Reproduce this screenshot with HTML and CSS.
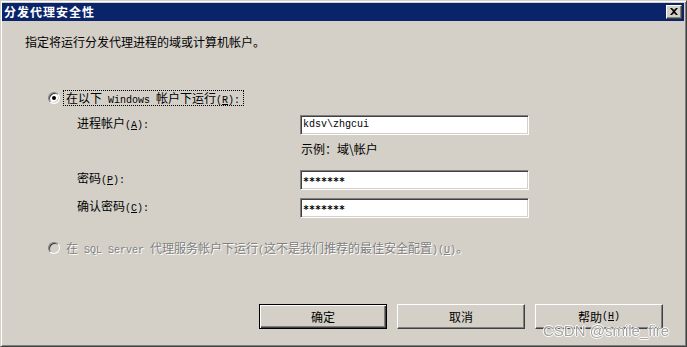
FILE: index.html
```html
<!DOCTYPE html>
<html lang="zh-CN">
<head>
<meta charset="utf-8">
<title>分发代理安全性</title>
<link rel="stylesheet" href="styles.css">
</head>
<body>
<div class="window">
  <div class="titlebar">
    <span class="title">分发代理安全性</span>
    <span class="close">
      <svg width="8" height="7" viewBox="0 0 8 7"><path d="M0 0h2l2 2 2-2h2L5 3.5 8 7H6L4 5 2 7H0l3-3.5z" fill="#000"/></svg>
    </span>
  </div>
  <div class="content">
    <div class="intro">指定将运行分发代理进程的域或计算机帐户。</div>

    <div class="option">
      <span class="radio checked"></span>
      <span class="opt-label focus">在以下<span class="m"> Windows </span>帐户下运行<span class="m">(<u>R</u>):</span></span>
    </div>

    <div class="fields">
      <div class="row">
        <span class="flabel">进程帐户<span class="m">(<u>A</u>):</span></span>
        <div class="input"><span class="m">kdsv\zhgcui</span></div>
      </div>
      <div class="hint">示例：域\帐户</div>
      <div class="row row2">
        <span class="flabel">密码<span class="m">(<u>P</u>):</span></span>
        <div class="input"><span class="m stars">*******</span></div>
      </div>
      <div class="row row3">
        <span class="flabel">确认密码<span class="m">(<u>C</u>):</span></span>
        <div class="input"><span class="m stars">*******</span></div>
      </div>
    </div>

    <div class="option disabled">
      <span class="radio"></span>
      <span class="opt-label">在<span class="m"> SQL Server </span>代理服务帐户下运行<span class="m">(</span>这不是我们推荐的最佳安全配置<span class="m">)(<u>U</u>)</span>。</span>
    </div>

    <div class="buttons">
      <div class="btn default">确定</div>
      <div class="btn">取消</div>
      <div class="btn">帮助<span class="m">(<u>H</u>)</span></div>
    </div>
  </div>
  <div class="watermark">CSDN @smile_fire</div>
</div>
</body>
</html>
```
FILE: styles.css
```css
html, body {
  margin: 0;
  padding: 0;
  background: #d4d0c8;
}
body {
  font-family: "Noto Sans CJK SC", "Liberation Sans", sans-serif;
  font-size: 12px;
  color: #000;
}
.window {
  position: relative;
  width: 687px;
  height: 347px;
  box-sizing: border-box;
  background: #d4d0c8;
  border: 1px solid;
  border-color: #d4d0c8 #404040 #404040 #d4d0c8;
  box-shadow: inset 1px 1px #fff, inset -1px -1px #808080;
  padding: 2px 2px 2px 1px;
  display: flex;
  flex-direction: column;
}
.titlebar {
  height: 18px;
  background: #0a246a;
  display: flex;
  align-items: center;
  justify-content: space-between;
  padding: 0 2px;
}
.title {
  color: #fff;
  font-weight: bold;
  font-size: 12px;
  line-height: 14px;
  letter-spacing: 1px;
}
.close {
  width: 16px;
  height: 14px;
  box-sizing: border-box;
  background: #d4d0c8;
  border: 1px solid;
  border-color: #fff #404040 #404040 #fff;
  box-shadow: inset -1px -1px #808080;
  display: flex;
  align-items: center;
  justify-content: center;
  padding: 0 1px 1px 0;
}
.close svg { display: block; }
.content {
  display: flex;
  flex-direction: column;
  flex: 1;
}
.m {
  font-family: "Liberation Mono", monospace;
  font-size: 10px;
}
u { text-decoration-thickness: 1px; text-underline-offset: 1px; }
.intro {
  margin: 15px 0 0 23px;
  height: 12px;
  line-height: 12px;
}
.option {
  display: flex;
  align-items: center;
  height: 14px;
  margin: 43px 0 0 46px;
}
.option.disabled { margin-top: 23px; }
.radio {
  position: relative;
  width: 12px;
  height: 12px;
  box-sizing: border-box;
  border-radius: 50%;
  background: #fff;
  border: 1px solid;
  border-color: #808080 #fff #fff #808080;
  box-shadow: inset 1px 1px #404040, inset -1px -1px #d4d0c8;
  flex: none;
}
.radio.checked::after {
  content: "";
  position: absolute;
  left: 3px;
  top: 3px;
  width: 4px;
  height: 4px;
  border-radius: 50%;
  background: #000;
}
.disabled .radio { background: #d4d0c8; }
.opt-label {
  margin-left: 4px;
  line-height: 12px;
  padding: 0 2px;
  height: 12px;
}
.opt-label.focus {
  outline: 1px dotted #000;
  outline-offset: 0;
  padding: 1px 3px 1px 2px;
}
.disabled .opt-label {
  color: #808080;
  text-shadow: 1px 1px 0 #fff;
}
.fields {
  margin: 10px 0 0 75px;
  display: flex;
  flex-direction: column;
}
.row {
  display: flex;
  align-items: flex-start;
  height: 20px;
}
.row2 { margin-top: 15px; }
.row3 { margin-top: 8px; }
.flabel {
  width: 223px;
  flex: none;
  line-height: 12px;
  margin-top: 2px;
}
.input {
  width: 229px;
  height: 20px;
  box-sizing: border-box;
  background: #fff;
  border: 1px solid;
  border-color: #808080 #fff #fff #808080;
  box-shadow: inset 1px 1px #404040, inset -1px -1px #d4d0c8;
  padding: 0 2px;
  line-height: 18px;
  display: flex;
  align-items: center;
}
.input .m { font-size: 10px; }
.stars {
  position: relative;
  top: 2px;
  font-family: "DejaVu Sans Mono", monospace;
  font-weight: bold;
  font-size: 10px;
}
.hint {
  margin: 7px 0 0 224px;
  height: 13px;
  line-height: 13px;
}
.buttons {
  display: flex;
  justify-content: flex-end;
  gap: 10px;
  margin-top: 49px;
  padding-right: 21px;
}
.btn {
  width: 128px;
  height: 25px;
  box-sizing: border-box;
  background: #d4d0c8;
  border: 1px solid;
  border-color: #fff #404040 #404040 #fff;
  box-shadow: inset -1px -1px #808080;
  display: flex;
  align-items: center;
  justify-content: center;
  line-height: 12px;
}
.btn.default {
  border: 1px solid #000;
  box-shadow: inset 1px 1px #fff, inset -1px -1px #404040, inset -2px -2px #808080;
}
.watermark {
  position: absolute;
  left: 542px;
  top: 323px;
  line-height: 13px;
  font-family: "Liberation Sans", sans-serif;
  font-size: 15px;
  color: #a0a0a0;
  text-shadow: 1px 0 #fff, -1px 0 #fff, 0 1px #fff, 0 -1px #fff;
  opacity: 0.9;
}
```
